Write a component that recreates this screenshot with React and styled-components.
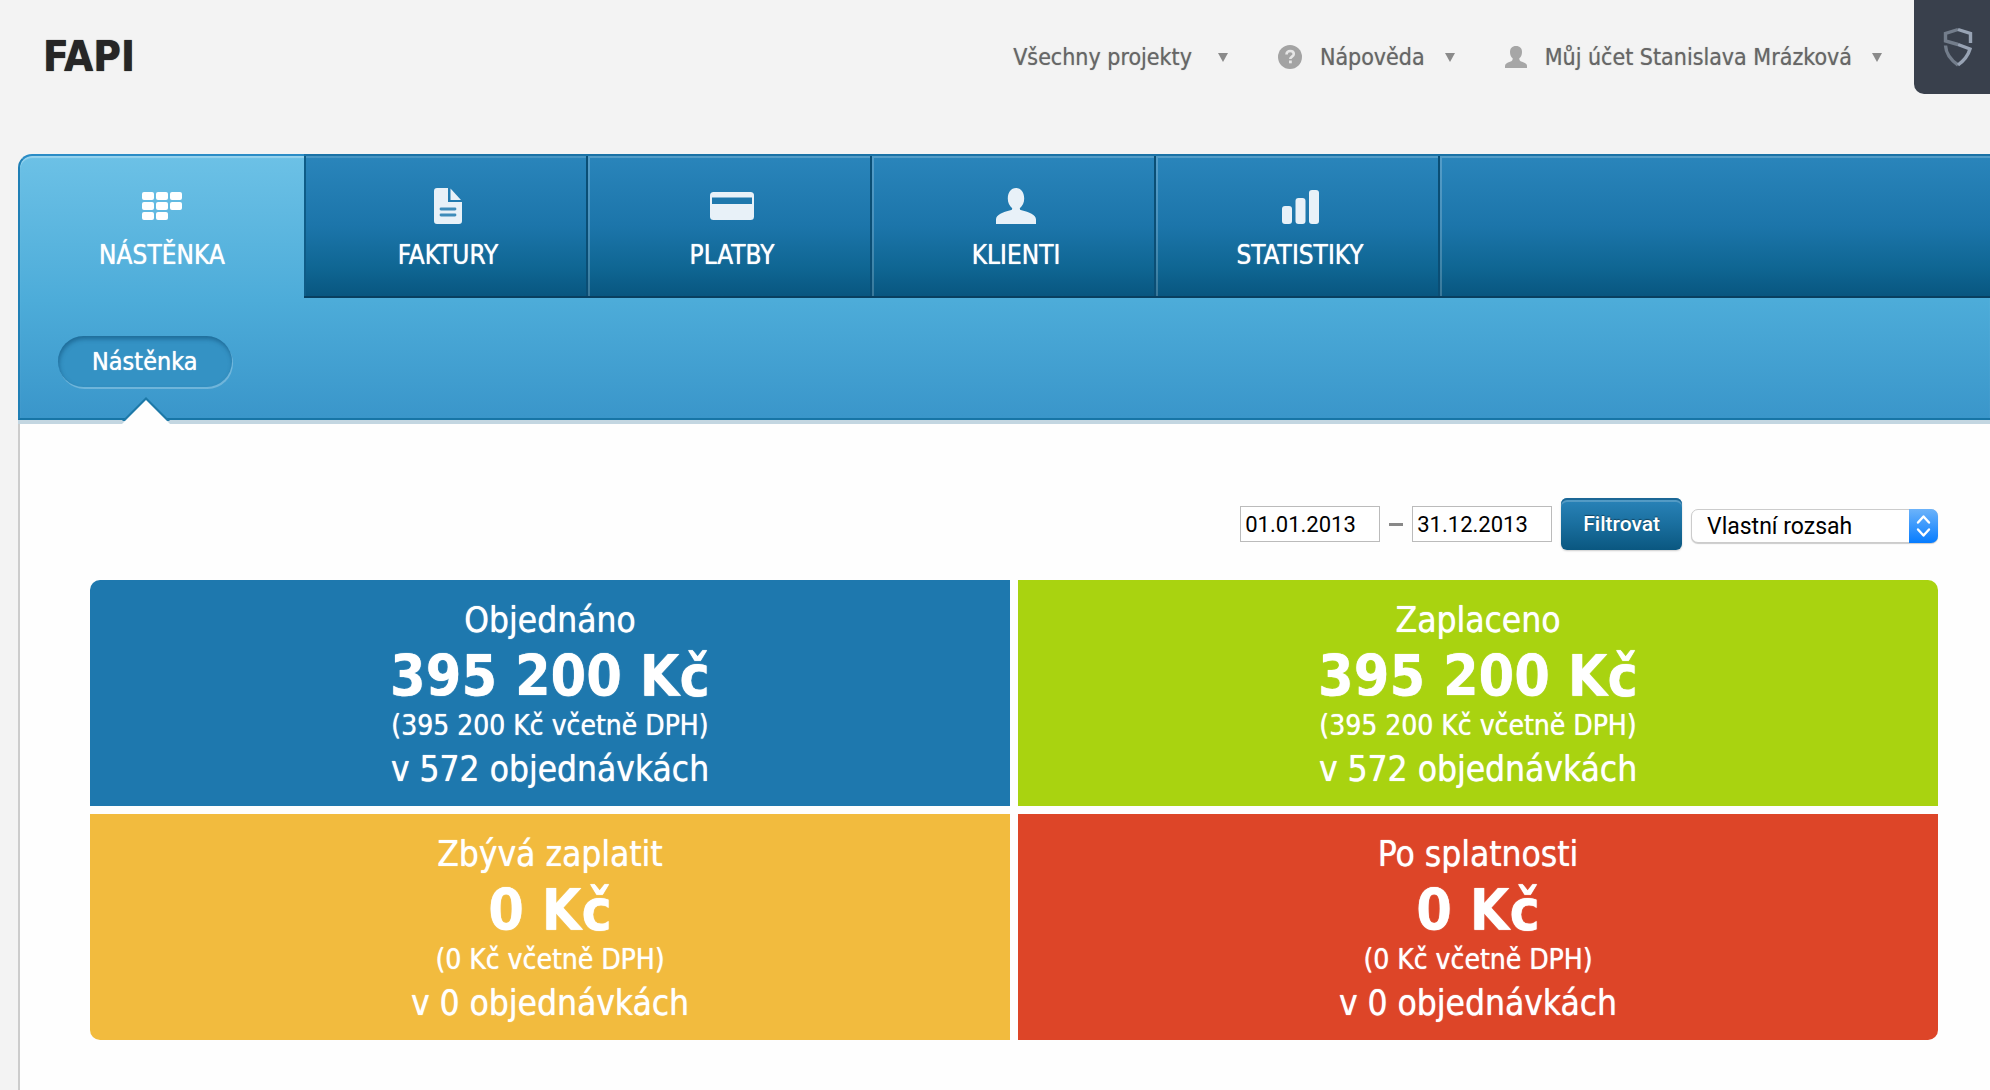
import React, { useState } from 'react';
import styled, { createGlobalStyle } from 'styled-components';

const GlobalStyle = createGlobalStyle`
  * {
    box-sizing: border-box;
  }

  body {
    margin: 0;
    background-color: #f3f3f3;
    font-family: 'DejaVu Sans Condensed', 'DejaVu Sans', Tahoma, sans-serif;
  }
`;

const Page = styled.div`
  display: flex;
  flex-direction: column;
  min-height: 100vh;
`;

const Header = styled.header`
  display: flex;
  justify-content: space-between;
  align-items: flex-start;
  height: 154px;
  padding-left: 43px;
`;

const Brand = styled.h1`
  margin: 0;
  padding-top: 33px;
  color: #262626;
  font-size: 42px;
  line-height: 48px;
  text-shadow: 0 0 1px #262626;
`;

const HeaderRight = styled.div`
  display: flex;
  align-items: flex-start;
  gap: 32px;
`;

const UserNav = styled.nav`
  display: flex;
  gap: 50px;
  padding-top: 42px;
`;

const Caret = styled.span`
  margin-left: 20px;
  border: 5px solid transparent;
  border-top: 9px solid #8a8a8a;
  border-bottom: 0;
`;

const UserLink = styled.a`
  display: flex;
  align-items: center;
  color: #666;
  font-size: 23px;
  line-height: 30px;
  text-decoration: none;
  text-shadow: 0 0 1px rgba(102, 102, 102, 0.6);
  white-space: nowrap;

  &:first-child ${Caret} {
    margin-left: 26px;
  }

  svg {
    margin-right: 18px;
  }
`;

const Badge = styled.button`
  display: flex;
  align-items: center;
  justify-content: center;
  width: 76px;
  height: 94px;
  padding: 0 0 0 12px;
  border: 0;
  border-bottom-left-radius: 10px;
  background-color: #39404c;
  cursor: pointer;
`;

const Layout = styled.div`
  display: flex;
  flex: 1;
  flex-direction: column;
  margin-left: 18px;
`;

const NavPanel = styled.div`
  position: relative;
  border-top: 2px solid #2a8cc6;
  border-left: 2px solid #1f7fb5;
  border-bottom: 2px solid #1775a6;
  border-top-left-radius: 14px;
  background: linear-gradient(#6cc1e6, #4dacd9 55%, #3a96ca);
  box-shadow: inset 0 2px 1px rgba(255, 255, 255, 0.3), 0 4px 0 #c3d6e1;
`;

const Tabs = styled.nav`
  display: flex;
  margin-top: -2px;
`;

const Tab = styled.a`
  display: flex;
  flex-direction: column;
  align-items: center;
  width: 284px;
  height: 144px;
  padding-top: 32px;
  color: white;
  font-size: 26px;
  line-height: 32px;
  text-decoration: none;
  text-transform: uppercase;
  text-shadow: 0 0 1px white;
  ${(props) => !props.$active && `
    border-top: 2px solid #1a72a6;
    border-bottom: 2px solid #083f60;
    padding: 30px 0 0 4px;
    background: linear-gradient(#2a85bb, #1c75aa 50%, #0f6693 80%, #085680);
    box-shadow: inset -2px 0 #0a4e75, inset 2px 2px rgba(255, 255, 255, 0.2);
  `}

  &:nth-child(2) {
    box-shadow: inset 2px 0 #0e5c87, inset -2px 0 #0a4e75, inset 0 2px rgba(255, 255, 255, 0.14);
  }

  svg {
    height: 40px;
    margin-bottom: 13px;
  }
`;

const TabsFill = styled.div`
  flex: 1;
  border-top: 2px solid #1a72a6;
  border-bottom: 2px solid #083f60;
  background: linear-gradient(#2a85bb, #1c75aa 50%, #0f6693 80%, #085680);
  box-shadow: inset 2px 2px rgba(255, 255, 255, 0.2);
`;

const SubNav = styled.nav`
  display: flex;
  height: 120px;
  padding: 38px 38px 0;
`;

const SubItem = styled.div`
  position: relative;
`;

const SubLink = styled.a`
  display: block;
  padding: 0 34px;
  border-radius: 26px;
  background-color: #3492c4;
  box-shadow: inset 1px 3px 4px rgba(10, 70, 110, 0.5), 1px 2px 0 rgba(255, 255, 255, 0.25);
  color: white;
  font-size: 25px;
  line-height: 51px;
  text-decoration: none;
  text-shadow: 0 0 1px white;
`;

const Notch = styled.svg`
  position: absolute;
  top: 60px;
  left: 50%;
  margin-left: -23px;
`;

const Content = styled.main`
  flex: 1;
  padding: 78px 52px 48px 70px;
  border-left: 2px solid #ccc;
  background-color: #fefefe;
`;

const Filter = styled.form`
  display: flex;
  align-items: center;
  justify-content: flex-end;
  gap: 9px;
  margin-bottom: 30px;
`;

const DateInput = styled.input`
  width: 140px;
  height: 36px;
  padding: 0 4px;
  border: 1px solid #bbb;
  background-color: white;
  color: black;
  font-family: Roboto, sans-serif;
  font-size: 22px;
`;

const Dash = styled.span`
  width: 14px;
  height: 3px;
  background-color: #888;
`;

const FilterButton = styled.button`
  height: 52px;
  padding: 0 22px;
  border: 0;
  border-radius: 6px;
  background: linear-gradient(#2a84ba, #1a6f9f 50%, #0a5780);
  box-shadow: inset 0 2px #1b6796, inset 0 4px rgba(255, 255, 255, 0.2), 0 1px 2px rgba(0, 0, 0, 0.2);
  color: white;
  font-family: Roboto, sans-serif;
  font-size: 21px;
  font-weight: 500;
  text-shadow: 0 -1px 1px rgba(0, 0, 0, 0.4);
  cursor: pointer;
`;

const SelectBox = styled.div`
  position: relative;
  margin-top: 4px;

  svg {
    position: absolute;
    top: 0;
    right: 0;
    pointer-events: none;
  }
`;

const RangeSelect = styled.select`
  display: block;
  width: 247px;
  height: 34px;
  padding: 0 40px 0 15px;
  border: 1px solid #ccc;
  border-radius: 7px;
  appearance: none;
  background-color: white;
  box-shadow: 0 1px 1px rgba(0, 0, 0, 0.2);
  color: black;
  font-family: Roboto, sans-serif;
  font-size: 23px;
`;

const Tiles = styled.div`
  display: grid;
  grid-template-columns: 1fr 1fr;
  gap: 8px;
  overflow: hidden;
  border-radius: 10px;
`;

const Tile = styled.section`
  padding: 16px 0 12px;
  background-color: ${(props) => props.$color};
  color: white;
  text-align: center;
  text-shadow: 0 0 1px white;
`;

const TileTitle = styled.h2`
  margin: 0;
  font-size: 35px;
  font-weight: normal;
  line-height: 48px;
`;

const TileAmount = styled.div`
  font-size: 57px;
  font-weight: bold;
  line-height: 64px;
`;

const TileVat = styled.div`
  font-size: 28px;
  line-height: 36px;
`;

const TileOrders = styled.div`
  font-size: 35px;
  line-height: 50px;
`;

const DashboardIcon = () => (
  <svg width="40" height="40" viewBox="0 0 40 40" fill="#fff">
    {[[0, 6], [14, 6], [28, 6], [0, 16], [14, 16], [28, 16], [0, 26], [14, 26]].map(([x, y]) => (
      <rect key={`${x}-${y}`} x={x} y={y} width="12" height="8" rx="2" />
    ))}
  </svg>
);

const InvoiceIcon = () => (
  <svg width="28" height="40" viewBox="0 0 28 40" fill="#e8f1f8">
    <path d="M3 2h11v14h14v19a3 3 0 0 1-3 3H3a3 3 0 0 1-3-3V5a3 3 0 0 1 3-3z" />
    <path d="M16.500 2.500L27 14H16.500z" />
    <path d="M7 23h14M7 29h14" stroke="#3e8cba" strokeWidth="2.800" strokeLinecap="round" />
  </svg>
);

const PaymentIcon = () => (
  <svg width="44" height="40" viewBox="0 0 44 40">
    <rect y="6" width="44" height="28" rx="3.500" fill="#e8f1f8" />
    <rect x="2" y="11.500" width="40" height="6.500" fill="#1e78ad" />
  </svg>
);

const ClientIcon = () => (
  <svg width="40" height="40" viewBox="0 0 40 40" fill="#e8f1f8">
    <path d="M20 2c5 0 8.200 4.500 8.200 10.500 0 4-1.600 7.600-4.400 9.700 0 1.200.4 1.800 1.800 2.100C33 25.800 40 29 40 33.500V38H0v-4.500C0 29 7 25.800 14.400 24.300c1.400-.3 1.800-.9 1.800-2.100-2.800-2.100-4.400-5.700-4.400-9.700C11.800 6.500 15 2 20 2z" />
  </svg>
);

const StatsIcon = () => (
  <svg width="37" height="40" viewBox="0 0 37 40" fill="#e8f1f8">
    <rect x="0" y="20" width="10" height="18" rx="3" />
    <rect x="13.500" y="12" width="10" height="26" rx="3" />
    <rect x="27" y="4" width="10" height="34" rx="3" />
  </svg>
);

const HelpIcon = () => (
  <svg width="24" height="24" viewBox="0 0 24 24">
    <circle cx="12" cy="12" r="12" fill="#a3a3a3" />
    <path d="M8.500 9.500C8.500 7.300 10 6 12.200 6c2.100 0 3.600 1.200 3.600 3 0 2.600-3.500 2.700-3.500 5" fill="none" stroke="#e6e6e6" strokeWidth="2.600" />
    <rect x="11" y="15.500" width="2.800" height="2.800" fill="#e6e6e6" />
  </svg>
);

const UserIcon = () => (
  <svg width="22" height="24" viewBox="0 0 22 24" fill="#a6a6a6">
    <path d="M11 1c4 0 6 2.500 6 6 0 2.800-1 5-2.700 6.300 0 2 .5 2.700 2.700 3.500 3 1 5 2.200 5 4.200v2H0v-2c0-2 2-3.200 5-4.200 2.200-.8 2.700-1.500 2.700-3.500C6 12 5 9.800 5 7c0-3.500 2-6 6-6z" />
  </svg>
);

const ShieldIcon = () => (
  <svg width="30" height="40" viewBox="0 0 30 40" fill="none" strokeWidth="3.400">
    <path d="M15 2.500L2.500 6.500v7.500L15 17.500" stroke="#737d8b" />
    <path d="M2.500 18.500c.5 8.500 6 15 12.500 19.500" stroke="#737d8b" />
    <path d="M15 2.500l12.500 4V16" stroke="#98a3b4" />
    <path d="M15 17.500l12 4.500c-2 7-6.500 12-12 16" stroke="#98a3b4" />
  </svg>
);

const tabs = [
  { label: 'Nástěnka', icon: DashboardIcon, active: true },
  { label: 'Faktury', icon: InvoiceIcon },
  { label: 'Platby', icon: PaymentIcon },
  { label: 'Klienti', icon: ClientIcon },
  { label: 'Statistiky', icon: StatsIcon },
];

const tiles = [
  { title: 'Objednáno', amount: '395 200 Kč', orders: 572, color: '#1e78ae' },
  { title: 'Zaplaceno', amount: '395 200 Kč', orders: 572, color: '#a9d310' },
  { title: 'Zbývá zaplatit', amount: '0 Kč', orders: 0, color: '#f2bb3e' },
  { title: 'Po splatnosti', amount: '0 Kč', orders: 0, color: '#dd4528' },
];

const App = () => {
  const [from, setFrom] = useState('01.01.2013');
  const [to, setTo] = useState('31.12.2013');

  return (
    <Page>
      <GlobalStyle />
      <Header>
        <Brand>FAPI</Brand>
        <HeaderRight>
          <UserNav>
            <UserLink href="#projekty">
              Všechny projekty
              <Caret />
            </UserLink>
            <UserLink href="#napoveda">
              <HelpIcon />
              Nápověda
              <Caret />
            </UserLink>
            <UserLink href="#ucet">
              <UserIcon />
              Můj účet Stanislava Mrázková
              <Caret />
            </UserLink>
          </UserNav>
          <Badge type="button" aria-label="Zabezpečení">
            <ShieldIcon />
          </Badge>
        </HeaderRight>
      </Header>

      <Layout>
        <NavPanel>
          <Tabs>
            {tabs.map(({ label, icon: Icon, active }) => (
              <Tab key={label} href={`#${label}`} $active={active}>
                <Icon />
                {label}
              </Tab>
            ))}
            <TabsFill />
          </Tabs>
          <SubNav>
            <SubItem>
              <SubLink href="#nastenka">Nástěnka</SubLink>
              <Notch width="48" height="30" viewBox="0 0 48 30">
                <path d="M0 25L24 1l24 24z" fill="#1d79a8" />
                <path d="M0 28L24 4l24 24v2H0z" fill="#fefefe" />
              </Notch>
            </SubItem>
          </SubNav>
        </NavPanel>

        <Content>
          <Filter onSubmit={(e) => e.preventDefault()}>
            <DateInput aria-label="Datum od" value={from} onChange={(e) => setFrom(e.target.value)} />
            <Dash />
            <DateInput aria-label="Datum do" value={to} onChange={(e) => setTo(e.target.value)} />
            <FilterButton type="submit">Filtrovat</FilterButton>
            <SelectBox>
              <RangeSelect aria-label="Rozsah">
                <option>Vlastní rozsah</option>
              </RangeSelect>
              <svg width="29" height="34" viewBox="0 0 29 34">
                <defs>
                  <linearGradient id="stepper" x1="0" y1="0" x2="0" y2="1">
                    <stop offset="0" stopColor="#6cb3fa" />
                    <stop offset="1" stopColor="#067cff" />
                  </linearGradient>
                </defs>
                <path d="M0 0h22a7 7 0 0 1 7 7v20a7 7 0 0 1-7 7H0z" fill="url(#stepper)" />
                <path d="M9 13.500l5.500-6 5.500 6M9 20.500l5.500 6 5.500-6" fill="none" stroke="#fff" strokeWidth="2.400" strokeLinecap="round" strokeLinejoin="round" />
              </svg>
            </SelectBox>
          </Filter>

          <Tiles>
            {tiles.map((tile) => (
              <Tile key={tile.title} $color={tile.color}>
                <TileTitle>{tile.title}</TileTitle>
                <TileAmount>{tile.amount}</TileAmount>
                <TileVat>({tile.amount} včetně DPH)</TileVat>
                <TileOrders>v {tile.orders} objednávkách</TileOrders>
              </Tile>
            ))}
          </Tiles>
        </Content>
      </Layout>
    </Page>
  );
};

export default App;
